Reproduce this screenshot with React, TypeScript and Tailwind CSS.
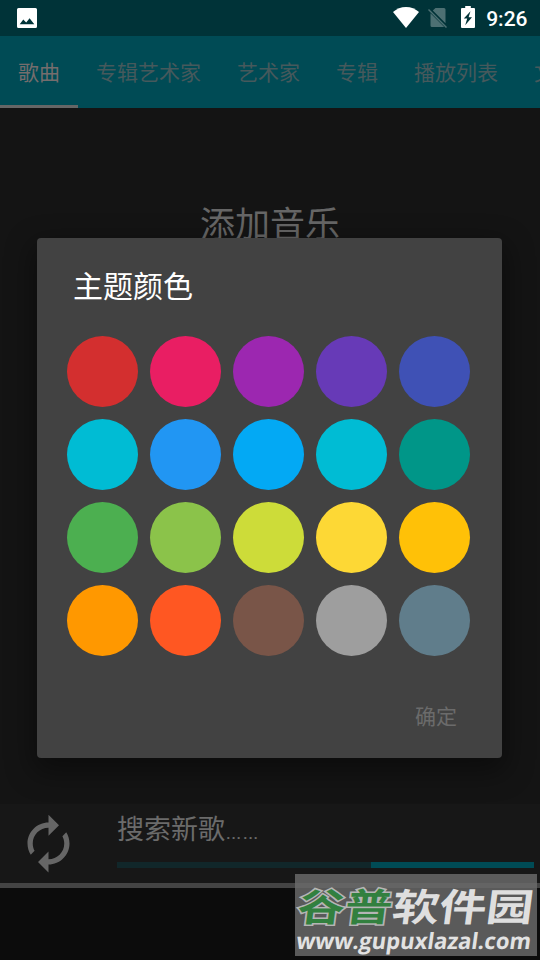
import clsx from "clsx";

const tabs = ["歌曲", "专辑艺术家", "艺术家", "专辑", "播放列表", "文件夹"];

const colors = [
  "bg-[#d32f2f]",
  "bg-[#e91e63]",
  "bg-[#9c27b0]",
  "bg-[#673ab7]",
  "bg-[#3f51b5]",
  "bg-[#00bcd4]",
  "bg-[#2196f3]",
  "bg-[#03a9f4]",
  "bg-[#00bcd4]",
  "bg-[#009688]",
  "bg-[#4caf50]",
  "bg-[#8bc34a]",
  "bg-[#cddc39]",
  "bg-[#fdd835]",
  "bg-[#ffc107]",
  "bg-[#ff9800]",
  "bg-[#ff5722]",
  "bg-[#795548]",
  "bg-[#9e9e9e]",
  "bg-[#607d8b]",
];

function StatusBar() {
  return (
    <div className="flex h-9 items-center justify-between bg-[#003338] pl-[17px] pr-[12.500px] text-white">
      <svg width="20" height="20" viewBox="0 0 20 20">
        <path
          fill="currentColor"
          fillRule="evenodd"
          d="M1.500 0h17A1.500 1.500 0 0 1 20 1.500v17a1.500 1.500 0 0 1-1.500 1.500h-17A1.500 1.500 0 0 1 0 18.500v-17A1.500 1.500 0 0 1 1.500 0zM2.700 16.200h14.600l-4.700-6-3.400 4.200-2.900-2.800z"
        />
      </svg>
      <div className="flex items-center">
        {/* Wifi */}
        <svg width="26" height="21" viewBox="0 0 26 21" className="-mt-px">
          <path fill="currentColor" d="M13 21 0 5C3.500 1.900 8 0 13 0s9.500 1.900 13 5z" />
        </svg>
        {/* No SIM */}
        <svg width="20" height="20" viewBox="0 0 20 20" className="ml-[9px] text-[#4d7073]">
          <path
            fill="currentColor"
            d="M7.500 0h8.500a1.500 1.500 0 0 1 1.500 1.500v13.800L4.800 2.600zM2.500 5.200 16 18.700q-.5.300-1 .3H4a1.500 1.500 0 0 1-1.500-1.500z"
          />
          <path stroke="currentColor" strokeWidth="1.500" d="M.5 1.500 18.500 19.500" />
        </svg>
        {/* Battery */}
        <svg width="14" height="22" viewBox="0 0 14 22" className="-mt-0.5 ml-[13px]">
          <path
            fill="currentColor"
            fillRule="evenodd"
            d="M4.200 0h5.600v2H13a1 1 0 0 1 1 1v18a1 1 0 0 1-1 1H1a1 1 0 0 1-1-1V3a1 1 0 0 1 1-1h3.200zM9.500 5.200 2.800 12.500h3.400L4.200 19.200 11 11.300H7.600z"
          />
        </svg>
        <span className="ml-[11.500px] mt-0.5 font-[Roboto] text-[21px] font-medium leading-6">
          9:26
        </span>
      </div>
    </div>
  );
}

function Tabs() {
  return (
    <div className="flex h-[72px] overflow-hidden bg-[#004b55] text-[21px]">
      {tabs.map((tab, i) => (
        <div
          key={tab}
          className={clsx(
            "flex shrink-0 items-center border-b-[3px] px-[18px] pt-1.5",
            i === 0
              ? "border-[#666666] text-[#756d6d]"
              : "border-transparent text-[#46595c]"
          )}
        >
          {tab}
        </div>
      ))}
    </div>
  );
}

function ColorDialog() {
  return (
    <div className="absolute left-[37px] top-[238px] flex h-[520px] w-[465px] flex-col rounded bg-[#424242] shadow-[0_10px_28px_4px_rgba(0,0,0,0.4)]">
      <h2 className="pl-[36px] pt-[27px] text-[30px] leading-[44px] text-white">
        主题颜色
      </h2>
      <div className="mt-[27px] grid grid-cols-[repeat(5,71px)] gap-3 pl-[30px]">
        {colors.map((color, i) => (
          <div key={i} className={clsx("size-[71px] rounded-full", color)} />
        ))}
      </div>
      <div className="mt-[45px] pr-[45px] text-right text-[21px] leading-8 text-[#6b6b6b]">
        确定
      </div>
    </div>
  );
}

function ScanBar() {
  return (
    <div className="flex h-[79px] bg-[#171717] text-[#6b6b6b]">
      <svg width="63" height="63" viewBox="0 0 24 24" className="ml-[17px] mt-[8px]">
        <path
          fill="#666666"
          d="M12 6v3l4-4-4-4v3c-4.420 0-8 3.580-8 8 0 1.570.46 3.030 1.240 4.260L6.700 14.800c-.45-.83-.7-1.790-.7-2.800 0-3.310 2.690-6 6-6zm6.760 1.740L17.300 9.200c.44.840.7 1.790.7 2.800 0 3.310-2.690 6-6 6v-3l-4 4 4 4v-3c4.420 0 8-3.580 8-8 0-1.570-.46-3.030-1.240-4.260z"
        />
      </svg>
      <div className="ml-[37px] w-[417px] pt-[6px]">
        <p className="text-[27px] leading-10">
          搜索新歌<span className="font-[Roboto] text-[26.500px] font-light">……</span>
        </p>
        <div className="mt-[12px] flex h-[6px] justify-end bg-[#11272a]">
          <div className="w-[163px] bg-[#004b55]" />
        </div>
      </div>
    </div>
  );
}

function Watermark() {
  return (
    <div className="absolute left-[295px] top-[874px] h-[82px] w-[242px] overflow-hidden bg-[#6b6b6b]/82">
      <div className="mt-[13px] flex h-[43px] w-[190px] origin-left translate-x-[3px] scale-x-[1.240] -skew-x-6 items-center whitespace-nowrap text-[38px] font-bold leading-[43px] text-[#dfdfdf]">
        <span className="font-bold text-[#32803f] [paint-order:stroke_fill] [-webkit-text-stroke:3px_#b5b5b5]">
          谷普
        </span>
        <span>软件园</span>
      </div>
      <div className="flex w-[240px] origin-bottom-left scale-x-[0.980] -skew-x-8 whitespace-nowrap font-['Open_Sans'] text-[22.500px] font-bold leading-[22px] text-[#e2e2e2]">
        www.gupuxlazal.com
      </div>
    </div>
  );
}

export default function App() {
  return (
    <div className="relative flex h-[960px] w-[540px] flex-col overflow-hidden bg-[#141414] font-[Roboto,'Noto_Sans_CJK_SC',sans-serif]">
      <StatusBar />
      <Tabs />
      <div className="flex-1 pt-[93px] text-center text-[35px] leading-[50px] text-[#666666]">
        添加音乐
      </div>
      <ScanBar />
      <div className="h-[77px] border-t-[5px] border-[#444444] bg-[#0c0c0c]" />
      <ColorDialog />
      <Watermark />
    </div>
  );
}
